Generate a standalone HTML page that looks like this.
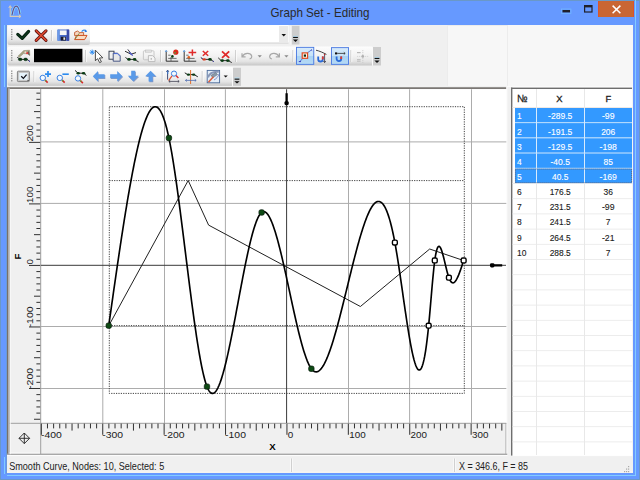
<!DOCTYPE html>
<html><head><meta charset="utf-8"><title>Graph Set - Editing</title>
<style>
html,body{margin:0;padding:0;}
body{width:640px;height:480px;overflow:hidden;background:#6699ff;font-family:"Liberation Sans",sans-serif;}
svg{display:block;font-family:"Liberation Sans",sans-serif;}
</style></head><body>
<svg width="640" height="480" viewBox="0 0 640 480" shape-rendering="auto">
<defs>
<linearGradient id="tb" x1="0" y1="0" x2="0" y2="1">
<stop offset="0" stop-color="#fdfdfd"/><stop offset="0.5" stop-color="#f2f2f2"/><stop offset="0.78" stop-color="#e4e4e4"/><stop offset="1" stop-color="#c6c6c6"/>
</linearGradient>
<linearGradient id="chev" x1="0" y1="0" x2="0" y2="1">
<stop offset="0" stop-color="#d8d8d8"/><stop offset="1" stop-color="#c4c4c4"/>
</linearGradient>
<linearGradient id="press" x1="0" y1="0" x2="0" y2="1">
<stop offset="0" stop-color="#d9ecfb"/><stop offset="0.5" stop-color="#c6e2f8"/><stop offset="0.52" stop-color="#a9d3f4"/><stop offset="1" stop-color="#b6daf5"/>
</linearGradient>
</defs>

<rect x="0" y="0" width="640" height="480" fill="#6699ff"/>
<rect x="0.5" y="0.5" width="639" height="479" fill="none" stroke="#6a98c8" stroke-width="1"/>
<rect x="4" y="25" width="1" height="62" fill="#82ccff"/>
<rect x="4" y="457" width="1" height="17" fill="#82ccff"/>
<rect x="6" y="25" width="1" height="449" fill="#6a9ad8"/>
<rect x="635" y="0" width="1" height="476" fill="#82ccff"/>
<rect x="7" y="475" width="629" height="1" fill="#82ccff"/>
<g>
<path d="M10.2,6.4 V16.4 H20.4" fill="none" stroke="#d8cdb8" stroke-width="1.1"/>
<path d="M8.8,8 L10.2,5.6 L11.6,8 M18.8,15 L21,16.4 L18.8,17.8" fill="none" stroke="#d8cdb8" stroke-width="1"/>
<path d="M12,15 C13.2,9 14.6,6.2 16.2,6.2 C17.8,6.2 19.2,9 20,14.2" fill="none" stroke="#88e0ff" stroke-width="2.6"/>
<path d="M12,15 C13.2,9 14.6,6.2 16.2,6.2 C17.8,6.2 19.2,9 20,14.2" fill="none" stroke="#6a4a8c" stroke-width="1.2"/>
</g>
<text x="320" y="16.5" font-size="12.4" fill="#2a2a2a" textLength="99" lengthAdjust="spacingAndGlyphs" text-anchor="middle" >Graph Set - Editing</text>
<rect x="562.5" y="10" width="7.5" height="2.4" fill="#20202a"/>
<rect x="561.5" y="9" width="9.5" height="4.4" fill="none" stroke="#7fd0ff" stroke-width="0.6" opacity="0.7"/>
<rect x="584.6" y="5.6" width="7.4" height="6.4" fill="none" stroke="#20202a" stroke-width="1.2"/>
<rect x="584.6" y="5.6" width="7.4" height="1.8" fill="#20202a"/>
<rect x="598" y="1" width="36" height="16" fill="#c96633"/>
<rect x="598" y="1" width="0.8" height="16" fill="#e0502a"/>
<rect x="633.2" y="1" width="0.8" height="16" fill="#e0502a"/>
<path d="M612.6,5.6 L620.4,13.2 M620.4,5.6 L612.6,13.2" stroke="#fff" stroke-width="1.5"/>
<rect x="7" y="25" width="626" height="448" fill="#f0f0f0"/>
<rect x="447" y="25" width="186" height="62" fill="#f7f7f7"/>
<rect x="447.5" y="25.5" width="60" height="61" fill="none" stroke="#ececec" stroke-width="1"/>
<rect x="7.5" y="25.5" width="82.5" height="19.5" rx="2" fill="url(#tb)"/>
<rect x="11.1" y="29.0" width="1.3" height="1.3" fill="#8a8a8a"/>
<rect x="11.1" y="31.4" width="1.3" height="1.3" fill="#8a8a8a"/>
<rect x="11.1" y="33.8" width="1.3" height="1.3" fill="#8a8a8a"/>
<rect x="11.1" y="36.2" width="1.3" height="1.3" fill="#8a8a8a"/>
<rect x="11.1" y="38.6" width="1.3" height="1.3" fill="#8a8a8a"/>
<rect x="90" y="25" width="198.5" height="18" fill="#ffffff"/>
<rect x="90" y="42.6" width="198.5" height="0.8" fill="#c8c8c8"/>
<rect x="279" y="26" width="9" height="16" fill="#eaeaea"/>
<path d="M281.5,34 H286 L283.75,36.6 Z" fill="#101010"/>
<rect x="291.5" y="25.8" width="8.0" height="18.7" fill="#cdcdcd"/>
<rect x="290.5" y="25.8" width="1" height="18.7" fill="#fafafa"/>
<rect x="293.1" y="35.9" width="4.8" height="0.8" fill="#a8e0ff"/>
<rect x="293.1" y="36.9" width="4.8" height="1.1" fill="#101010"/>
<path d="M292.9,39.5 H298.1 L295.5,41.9 Z" fill="#101010"/>
<rect x="7.5" y="46.5" width="366.0" height="19.0" rx="2" fill="url(#tb)"/>
<rect x="11.1" y="50.0" width="1.3" height="1.3" fill="#8a8a8a"/>
<rect x="11.1" y="52.4" width="1.3" height="1.3" fill="#8a8a8a"/>
<rect x="11.1" y="54.8" width="1.3" height="1.3" fill="#8a8a8a"/>
<rect x="11.1" y="57.2" width="1.3" height="1.3" fill="#8a8a8a"/>
<rect x="11.1" y="59.6" width="1.3" height="1.3" fill="#8a8a8a"/>
<rect x="373" y="47" width="8" height="18.5" fill="#cdcdcd"/>
<rect x="372" y="47" width="1" height="18.5" fill="#fafafa"/>
<rect x="374.6" y="56.9" width="4.8" height="0.8" fill="#a8e0ff"/>
<rect x="374.6" y="57.9" width="4.8" height="1.1" fill="#101010"/>
<path d="M374.4,60.5 H379.6 L377.0,62.9 Z" fill="#101010"/>
<rect x="7.5" y="67" width="226.5" height="19" rx="2" fill="url(#tb)"/>
<rect x="11.1" y="70.5" width="1.3" height="1.3" fill="#8a8a8a"/>
<rect x="11.1" y="72.9" width="1.3" height="1.3" fill="#8a8a8a"/>
<rect x="11.1" y="75.3" width="1.3" height="1.3" fill="#8a8a8a"/>
<rect x="11.1" y="77.7" width="1.3" height="1.3" fill="#8a8a8a"/>
<rect x="11.1" y="80.1" width="1.3" height="1.3" fill="#8a8a8a"/>
<rect x="233" y="67.8" width="8" height="18.400000000000006" fill="#cdcdcd"/>
<rect x="232" y="67.8" width="1" height="18.400000000000006" fill="#fafafa"/>
<rect x="234.6" y="77.60000000000001" width="4.8" height="0.8" fill="#a8e0ff"/>
<rect x="234.6" y="78.60000000000001" width="4.8" height="1.1" fill="#101010"/>
<path d="M234.4,81.2 H239.6 L237.0,83.60000000000001 Z" fill="#101010"/>
<g id="icons">
<path d="M17.8,34.4 L22.2,38.4 L28.6,31.4" fill="none" stroke="#062010" stroke-width="3.2" stroke-linecap="round" stroke-linejoin="round"/>
<path d="M17.8,34.4 L22.2,38.4 L28.6,31.4" fill="none" stroke="#0e3a1c" stroke-width="1.2" stroke-linecap="round" stroke-linejoin="round"/>
<path d="M36.2,30.8 L46,40.4 M46,30.8 L36.2,40.4" stroke="#5a1410" stroke-width="3.1" stroke-linecap="round"/>
<path d="M36.2,30.8 L46,40.4 M46,30.8 L36.2,40.4" stroke="#e0482e" stroke-width="1.5" stroke-linecap="round"/>
<rect x="51" y="30" width="0.8" height="11" fill="#b8b8b8"/>
<rect x="51.8" y="30" width="0.8" height="11" fill="#ffffff"/>
<rect x="57.4" y="29.6" width="11.8" height="11.2" rx="0.8" fill="#4a6cc8"/>
<rect x="57.4" y="29.6" width="2.2" height="11.2" fill="#6a9ae8"/>
<rect x="66.6" y="29.6" width="2.6" height="11.2" fill="#3a4aa8"/>
<rect x="59.8" y="30.4" width="6.8" height="4.6" fill="#f6f6f6"/>
<rect x="60.8" y="36.8" width="5.2" height="3.8" fill="#1a1a28"/>
<rect x="63.4" y="37.4" width="1.8" height="2.4" fill="#e8e8e8"/>
<path d="M74.6,32.4 L77.4,31 L79.8,32.6 H83.6 V35.6 H74.6 Z" fill="#f6d6c0" stroke="#c05a30" stroke-width="0.9" stroke-linejoin="round"/>
<path d="M74.6,39.6 L76.6,35.4 H87 L84.6,39.6 Z" fill="#f8dcc4" stroke="#d0501e" stroke-width="1" stroke-linejoin="round"/>
<path d="M75.2,39 L79.4,33.2" stroke="#6a8a3a" stroke-width="0.8"/>
<path d="M81.6,31.6 C83,29.8 84.8,29.6 86.2,31" fill="none" stroke="#3a8ae8" stroke-width="1.1"/>
<path d="M85.2,29.6 L87.2,31.8 L84.6,32.2 Z" fill="#2a7ae0"/>
<path d="M18,56.2 L23.6,50.6 L29.6,50.2 L29.8,55.6 L27.6,53.8 L23.6,53.6 L19.6,57 Z" fill="#a8a484" stroke="#8a8a70" stroke-width="0.5" stroke-linejoin="round"/>
<path d="M28.6,50.4 L29.8,55.6 L27.6,53.8 Z" fill="#5a5a5a"/>
<circle cx="27.2" cy="53.2" r="1.1" fill="#e03a3a"/><circle cx="25.4" cy="52.2" r="1" fill="#f0d8c8"/>
<path d="M17.2,57.4 L21,59.4 H27 L29.8,61.4" fill="none" stroke="#202020" stroke-width="0.9"/>
<path d="M28.6,60.6 L30,61.6" stroke="#4040c0" stroke-width="1"/>
<ellipse cx="20.2" cy="59.4" rx="1.9" ry="1.4" fill="#083a12" stroke="#062010" stroke-width="0.4"/><ellipse cx="25.6" cy="59.4" rx="1.9" ry="1.4" fill="#083a12" stroke="#062010" stroke-width="0.4"/>
<rect x="34" y="48.8" width="48.4" height="13.4" fill="#000"/>
<rect x="85" y="50" width="0.8" height="12" fill="#b8b8b8"/>
<rect x="85.8" y="50" width="0.8" height="12" fill="#ffffff"/>
<path d="M95.4,50.2 L95.4,60.8 L97.6,58.6 L99.6,62.6 L101.4,61.8 L99.4,58 L102.8,57.8 Z" fill="#fff" stroke="#3a3a3a" stroke-width="0.9" stroke-linejoin="round"/>
<path d="M90.4,50.4 L94,54 M94,50.4 L90.4,54 M92.2,49.6 V54.8 M89.6,52.2 H94.8" stroke="#2a8af0" stroke-width="0.9"/>
<rect x="109" y="51.2" width="5" height="8" fill="#f0f0f0" stroke="#303848" stroke-width="0.9"/>
<path d="M113.2,53.2 H117.6 L120.2,55.8 V61.2 H113.2 Z" fill="#e8e8e8" stroke="#3a4a7a" stroke-width="0.9"/>
<path d="M113.6,53.6 H117.4 L119.8,56" stroke="#4a6ae0" stroke-width="0.9" fill="none"/>
<path d="M125,51.2 L131,54.2 L136,52.6" fill="none" stroke="#303030" stroke-width="1"/>
<path d="M127.8,49.4 L132.4,55.6" stroke="#3a3a4a" stroke-width="1"/>
<path d="M129.4,52.4 L132.6,55.4" stroke="#4a5ae8" stroke-width="1.1"/>
<path d="M125.4,57.4 L128,59.4 H134 L138.6,61.8" fill="none" stroke="#202020" stroke-width="0.9"/>
<ellipse cx="129" cy="59.4" rx="1.8" ry="1.3" fill="#083a12"/><ellipse cx="134.6" cy="59.4" rx="1.8" ry="1.3" fill="#083a12"/>
<rect x="143.4" y="50.8" width="10.6" height="9" rx="0.8" fill="none" stroke="#c4c4c4" stroke-width="0.9"/>
<rect x="145.6" y="50" width="5.8" height="2.2" fill="#e4e4e4" stroke="#c0c0c0" stroke-width="0.6"/>
<path d="M148.4,55.6 H152.6 L155,58 V61.6 H148.4 Z" fill="#f4f4f4" stroke="#b8b8b8" stroke-width="0.9"/>
<rect x="150.6" y="58.2" width="1.4" height="1.4" fill="#b0b0b0"/>
<rect x="160" y="50" width="0.8" height="12" fill="#b8b8b8"/>
<rect x="160.8" y="50" width="0.8" height="12" fill="#ffffff"/>
<path d="M166.2,51.4 V61.2 H178.2" fill="none" stroke="#202020" stroke-width="0.9"/>
<path d="M165.2,52 L166.2,50.2 L167.2,52" fill="none" stroke="#4a90e0" stroke-width="0.8"/>
<path d="M168.2,55.2 H170.6 M168.2,58.4 H176.6 M171.0,57 V61" stroke="#505050" stroke-width="0.8"/>
<circle cx="175.8" cy="52.2" r="2.6" fill="#d82a1a"/><circle cx="175" cy="52.8" r="0.9" fill="#50a040"/>
<circle cx="172.4" cy="56.4" r="1.3" fill="#083a12"/>
<path d="M184.2,51.4 V61.2 H196.2" fill="none" stroke="#202020" stroke-width="0.9"/>
<path d="M183.2,52 L184.2,50.2 L185.2,52" fill="none" stroke="#4a90e0" stroke-width="0.8"/>
<path d="M186.2,55.2 H188.6 M186.2,58.4 H194.6 M189.0,57 V61" stroke="#505050" stroke-width="0.8"/>
<path d="M188.6,52.6 H196.2 M192.4,49.6 V55.8" stroke="#e02a2a" stroke-width="1.5"/>
<circle cx="188.8" cy="57.2" r="1.3" fill="#e06020"/>
<path d="M202.8,51 L208.20000000000002,55.8 M208.20000000000002,51 L202.8,55.8" stroke="#e02a2a" stroke-width="1.5"/>
<path d="M200.8,57.6 L203.4,59.4 H210.20000000000002 L213.8,61.6" fill="none" stroke="#202020" stroke-width="0.9"/>
<ellipse cx="204.20000000000002" cy="59.4" rx="1.7" ry="1.2" fill="#d83a20"/><ellipse cx="210.0" cy="59.4" rx="1.8" ry="1.3" fill="#083a12"/>
<path d="M201.4,58 L202.4,58.6 M212.8,61 L213.8,61.6" stroke="#4040c0" stroke-width="0.9"/>
<path d="M222.0,51.4 L229.2,57.8 M229.2,51.4 L222.0,57.8" stroke="#e02a2a" stroke-width="1.8"/>
<path d="M218.2,57.8 L221.2,60.6 H228.2 L231.79999999999998,62.6" fill="none" stroke="#202020" stroke-width="0.9"/>
<ellipse cx="222.2" cy="60.6" rx="1.8" ry="1.3" fill="#083a12"/><ellipse cx="227.79999999999998" cy="60.6" rx="1.8" ry="1.3" fill="#083a12"/>
<rect x="235.4" y="50" width="0.8" height="12" fill="#b8b8b8"/>
<rect x="236.20000000000002" y="50" width="0.8" height="12" fill="#ffffff"/>
<path d="M242,53.2 V56.8 H245.6 M242.6,56.2 C244.6,52.6 250.4,52.4 251.6,55.8 C252.2,57.4 251,58.6 249.6,58.8" fill="none" stroke="#a8a8a8" stroke-width="1.2"/>
<path d="M257.6,55.3 H261.8 L259.7,57.4 Z" fill="#8a8a8a"/>
<path d="M279.4,53.2 V56.8 H275.8 M278.8,56.2 C276.8,52.6 271,52.4 269.8,55.8 C269.2,57.4 270.4,58.6 271.8,58.8" fill="none" stroke="#a8a8a8" stroke-width="1.2"/>
<path d="M284.3,55.3 H288.5 L286.4,57.4 Z" fill="#8a8a8a"/>
<rect x="292.6" y="50" width="0.8" height="12" fill="#b8b8b8"/>
<rect x="293.40000000000003" y="50" width="0.8" height="12" fill="#ffffff"/>
<rect x="296" y="46.9" width="18.19999999999999" height="17.9" fill="url(#press)"/>
<rect x="296.45" y="47.35" width="17.29999999999999" height="17.0" fill="none" stroke="#4a78e0" stroke-width="0.9"/>
<path d="M300,61.4 L302.6,58.6 M307.4,52.8 L311.4,50" stroke="#3a5ac8" stroke-width="0.8"/>
<path d="M298.8,61.6 H301 M311,49.6 L312.2,50.6" stroke="#3a3ac0" stroke-width="1"/>
<rect x="302.2" y="52.9" width="5.4" height="5.4" fill="#fff0e0" stroke="#e04a20" stroke-width="1.2"/>
<rect x="303.8" y="54.5" width="2.2" height="2.2" fill="#0a2a10"/>
<path d="M316,50.2 C319.6,51 323,52.6 326.4,54.4" fill="none" stroke="#303030" stroke-width="0.9"/>
<path d="M318.2,56.4 V59.2 A2.3,2.3 0 0 0 322.8,59.2 V56.4" fill="none" stroke="#2a6ad8" stroke-width="1.8"/>
<path d="M322.8,56.4 V59.4" stroke="#e03a2a" stroke-width="1.8"/>
<path d="M324.6,54.6 V62.4 M323.4,61 L324.6,62.6 L325.8,61" fill="none" stroke="#303040" stroke-width="0.8"/>
<circle cx="324.6" cy="54.6" r="0.8" fill="#c03030"/>
<rect x="331" y="47.2" width="18" height="17.599999999999994" fill="url(#press)"/>
<rect x="331.45" y="47.650000000000006" width="17.1" height="16.699999999999996" fill="none" stroke="#4a78e0" stroke-width="0.9"/>
<rect x="335" y="52.4" width="2.2" height="2" fill="#101010"/>
<path d="M337.2,53.4 H345 M343.8,52.3 L345.2,53.4 L343.8,54.5" fill="none" stroke="#303030" stroke-width="0.8"/>
<path d="M336.6,56.4 V58.8 A2.3,2.3 0 0 0 341.2,58.8 V56.4" fill="none" stroke="#2a6ad8" stroke-width="1.8"/>
<path d="M341.2,56.4 V59" stroke="#e03a2a" stroke-width="1.8"/>
<rect x="350.6" y="50" width="0.8" height="12" fill="#b8b8b8"/>
<rect x="351.40000000000003" y="50" width="0.8" height="12" fill="#ffffff"/>
<path d="M362.8,50 V63" stroke="#c8c8c8" stroke-width="0.8" stroke-dasharray="1.2 0.8"/>
<path d="M357,56.4 H368.6" stroke="#cfcfcf" stroke-width="0.8" stroke-dasharray="1.2 0.8"/>
<rect x="357" y="52" width="3.6" height="1.2" fill="#b8b8b8"/><rect x="357" y="59.2" width="3.6" height="1.2" fill="#b8b8b8"/><rect x="357" y="61" width="3.6" height="1" fill="#c8c8c8"/><circle cx="362.8" cy="56.4" r="1.3" fill="#b0b0b0"/>
<rect x="17.4" y="71.2" width="12" height="10.4" rx="0.8" fill="#c8c8c8" stroke="#7a7a7a" stroke-width="0.9"/>
<rect x="19.2" y="73" width="8.4" height="6.8" fill="#e6f4fc"/>
<path d="M21.2,76.2 L23.4,78.4 L26.6,74.6" fill="none" stroke="#101018" stroke-width="1.3"/>
<rect x="27.6" y="80" width="1" height="1" fill="#202020"/>
<rect x="33.6" y="71" width="0.8" height="11" fill="#b8b8b8"/>
<rect x="34.4" y="71" width="0.8" height="11" fill="#ffffff"/>
<circle cx="42.8" cy="77.9" r="2.7" fill="#f4faff" stroke="#3a80e0" stroke-width="1"/>
<path d="M45.099999999999994,80.2 L47.699999999999996,82.60000000000001" stroke="#d82a2a" stroke-width="1.6"/>
<path d="M45.099999999999994,80.2 L46.0,81.10000000000001" stroke="#60a040" stroke-width="1.6"/>
<path d="M45,74.1 H51 M48,71.1 V77.1" stroke="#2a8af0" stroke-width="1.7"/>
<circle cx="59.8" cy="77.9" r="2.7" fill="#f4faff" stroke="#3a80e0" stroke-width="1"/>
<path d="M62.099999999999994,80.2 L64.7,82.60000000000001" stroke="#d82a2a" stroke-width="1.6"/>
<path d="M62.099999999999994,80.2 L63.0,81.10000000000001" stroke="#60a040" stroke-width="1.6"/>
<path d="M62.4,74.2 H68.8" stroke="#2a8af0" stroke-width="1.6"/>
<circle cx="78" cy="78.4" r="2.7" fill="#f4faff" stroke="#3a80e0" stroke-width="1"/>
<path d="M80.3,80.7 L82.9,83.10000000000001" stroke="#d82a2a" stroke-width="1.6"/>
<path d="M80.3,80.7 L81.2,81.60000000000001" stroke="#60a040" stroke-width="1.6"/>
<path d="M75,70.4 L78,73.2 H83.6 L86.4,75.4" fill="none" stroke="#202020" stroke-width="1"/>
<ellipse cx="78.2" cy="73.2" rx="1.7" ry="1.3" fill="#083a12"/><ellipse cx="83.6" cy="73.2" rx="1.7" ry="1.3" fill="#083a12"/>
<path d="M92.8,76.2 L98,71 V74.2 H104.6 V78.2 H98 V81.4 Z" fill="#3a5aa0" transform="translate(0.7,0.9)" opacity="0.55"/>
<path d="M92.8,76.2 L98,71 V74.2 H104.6 V78.2 H98 V81.4 Z" fill="#5a9ae8"/>
<path d="M122.4,76.2 L117.2,71 V74.2 H110.2 V78.2 H117.2 V81.4 Z" fill="#3a5aa0" transform="translate(0.7,0.9)" opacity="0.55"/>
<path d="M122.4,76.2 L117.2,71 V74.2 H110.2 V78.2 H117.2 V81.4 Z" fill="#5a9ae8"/>
<path d="M133.2,81.2 L127.8,75.8 H131.2 V70.8 H135.2 V75.8 H138.6 Z" fill="#3a5aa0" transform="translate(0.7,0.9)" opacity="0.55"/>
<path d="M133.2,81.2 L127.8,75.8 H131.2 V70.8 H135.2 V75.8 H138.6 Z" fill="#5a9ae8"/>
<path d="M150.6,70.8 L145.2,76.2 H148.6 V81.4 H152.6 V76.2 H156 Z" fill="#3a5aa0" transform="translate(0.7,0.9)" opacity="0.55"/>
<path d="M150.6,70.8 L145.2,76.2 H148.6 V81.4 H152.6 V76.2 H156 Z" fill="#5a9ae8"/>
<rect x="161.8" y="71" width="0.8" height="11" fill="#b8b8b8"/>
<rect x="162.60000000000002" y="71" width="0.8" height="11" fill="#ffffff"/>
<path d="M167.6,70.4 V79.6 M166.4,71.8 L167.6,70.2 L168.8,71.8" fill="none" stroke="#2a3a6a" stroke-width="0.9"/>
<path d="M167.8,70.6 V74" stroke="#3a80e0" stroke-width="0.9"/>
<circle cx="174" cy="73.6" r="2.6" fill="#f4faff" stroke="#3a80e0" stroke-width="1"/>
<path d="M172,75.8 L168.6,80.6" stroke="#e05030" stroke-width="1.2"/>
<path d="M176,75.6 L178.4,78" stroke="#d82a2a" stroke-width="1.4"/>
<path d="M169,81.4 H179 M170.2,80.3 L168.8,81.4 L170.2,82.5 M177.8,80.3 L179.2,81.4 L177.8,82.5" fill="none" stroke="#404050" stroke-width="0.8"/>
<path d="M184.8,72.8 L187.6,74.6 H194.2 L197.8,76.8" fill="none" stroke="#202020" stroke-width="1"/>
<ellipse cx="188.4" cy="74.6" rx="1.7" ry="1.2" fill="#083a12"/><ellipse cx="193.6" cy="74.6" rx="1.7" ry="1.2" fill="#083a12"/>
<path d="M190.6,70 V84" stroke="#e07030" stroke-width="1"/>
<path d="M185.6,80.4 H196 M186.8,79.3 L185.4,80.4 L186.8,81.5 M194.8,79.3 L196.2,80.4 L194.8,81.5" fill="none" stroke="#4a6ab0" stroke-width="0.8"/>
<rect x="201.8" y="71" width="0.8" height="11" fill="#b8b8b8"/>
<rect x="202.60000000000002" y="71" width="0.8" height="11" fill="#ffffff"/>
<rect x="207.2" y="70.4" width="12.4" height="12.4" fill="#e4eef8" stroke="#4a6a9a" stroke-width="0.9"/>
<path d="M208,77.4 C209.6,72.6 213.4,71.4 218.8,71.8" fill="none" stroke="#8a98b8" stroke-width="2"/>
<path d="M210.8,75.6 L215.6,72.6 L217.6,74.6 L213,77.6 Z" fill="#8a9aa8" stroke="#5a6a7a" stroke-width="0.5"/>
<path d="M208.4,82.2 L213.4,76.8" stroke="#d86040" stroke-width="1.6"/>
<path d="M214,80 C216.5,78.6 218.4,76.6 219,74" fill="none" stroke="#6a7ac0" stroke-width="0.8"/>
<path d="M223.6,75.4 H227.8 L225.7,77.6 Z" fill="#101010"/>
</g>
<rect x="7" y="87" width="500.5" height="368.5" fill="#f0f0f0"/>
<rect x="7" y="85.9" width="626" height="1" fill="#fbfbfb"/>
<rect x="7" y="86.9" width="499.5" height="0.5" fill="#a8a8a8"/>
<rect x="7" y="87.4" width="499.5" height="1.5" fill="#6e6a66"/>
<rect x="9.2" y="89" width="31" height="0.8" fill="#fafafa"/>
<rect x="7" y="88" width="1.2" height="366" fill="#787068"/>
<rect x="8.2" y="88" width="1.6" height="366" fill="#a4a4a4"/>
<rect x="506.3" y="87" width="1.2" height="368.5" fill="#ffffff"/>
<rect x="505.4" y="423" width="0.9" height="31" fill="#b0b0b0"/>
<rect x="7" y="453.6" width="500.5" height="1.4" fill="#a8a8a8"/>
<rect x="7" y="455.2" width="626" height="1" fill="#ffffff"/>
<rect x="9.5" y="452.4" width="31" height="1" fill="#f8f8f8"/>
<rect x="41" y="89.2" width="465.3" height="333.8" fill="#ffffff"/>
<rect x="40.2" y="89" width="1" height="365" fill="#a0a0a0"/>
<rect x="9" y="422.8" width="497.3" height="1" fill="#a0a0a0"/>
<rect x="9.8" y="89.2" width="0.9" height="365" fill="#fafafa"/>
<path d="M41.34,423.6 v11.2 M47.48,423.6 v4.8 M53.62,423.6 v4.8 M59.76,423.6 v4.8 M65.90,423.6 v4.8 M72.04,423.6 v7 M78.18,423.6 v4.8 M84.32,423.6 v4.8 M90.46,423.6 v4.8 M96.60,423.6 v4.8 M102.74,423.6 v11.2 M108.88,423.6 v4.8 M115.02,423.6 v4.8 M121.16,423.6 v4.8 M127.30,423.6 v4.8 M133.44,423.6 v7 M139.58,423.6 v4.8 M145.72,423.6 v4.8 M151.86,423.6 v4.8 M158.00,423.6 v4.8 M164.14,423.6 v11.2 M170.28,423.6 v4.8 M176.42,423.6 v4.8 M182.56,423.6 v4.8 M188.70,423.6 v4.8 M194.84,423.6 v7 M200.98,423.6 v4.8 M207.12,423.6 v4.8 M213.26,423.6 v4.8 M219.40,423.6 v4.8 M225.54,423.6 v11.2 M231.68,423.6 v4.8 M237.82,423.6 v4.8 M243.96,423.6 v4.8 M250.10,423.6 v4.8 M256.24,423.6 v7 M262.38,423.6 v4.8 M268.52,423.6 v4.8 M274.66,423.6 v4.8 M280.80,423.6 v4.8 M286.94,423.6 v11.2 M293.08,423.6 v4.8 M299.22,423.6 v4.8 M305.36,423.6 v4.8 M311.50,423.6 v4.8 M317.64,423.6 v7 M323.78,423.6 v4.8 M329.92,423.6 v4.8 M336.06,423.6 v4.8 M342.20,423.6 v4.8 M348.34,423.6 v11.2 M354.48,423.6 v4.8 M360.62,423.6 v4.8 M366.76,423.6 v4.8 M372.90,423.6 v4.8 M379.04,423.6 v7 M385.18,423.6 v4.8 M391.32,423.6 v4.8 M397.46,423.6 v4.8 M403.60,423.6 v4.8 M409.74,423.6 v11.2 M415.88,423.6 v4.8 M422.02,423.6 v4.8 M428.16,423.6 v4.8 M434.30,423.6 v4.8 M440.44,423.6 v7 M446.58,423.6 v4.8 M452.72,423.6 v4.8 M458.86,423.6 v4.8 M465.00,423.6 v4.8 M471.14,423.6 v11.2 M477.28,423.6 v4.8 M483.42,423.6 v4.8 M489.56,423.6 v4.8 M495.70,423.6 v4.8 M501.84,423.6 v7" stroke="#303030" stroke-width="1"/>
<path d="M40.2,419.25 h-6.2 M40.2,413.10 h-3.8 M40.2,406.95 h-3.8 M40.2,400.80 h-3.8 M40.2,394.64 h-3.8 M40.2,388.49 h-11.2 M40.2,382.34 h-3.8 M40.2,376.18 h-3.8 M40.2,370.03 h-3.8 M40.2,363.88 h-3.8 M40.2,357.73 h-6.2 M40.2,351.57 h-3.8 M40.2,345.42 h-3.8 M40.2,339.27 h-3.8 M40.2,333.11 h-3.8 M40.2,326.96 h-11.2 M40.2,320.81 h-3.8 M40.2,314.65 h-3.8 M40.2,308.50 h-3.8 M40.2,302.35 h-3.8 M40.2,296.19 h-6.2 M40.2,290.04 h-3.8 M40.2,283.89 h-3.8 M40.2,277.74 h-3.8 M40.2,271.58 h-3.8 M40.2,265.43 h-11.2 M40.2,259.28 h-3.8 M40.2,253.12 h-3.8 M40.2,246.97 h-3.8 M40.2,240.82 h-3.8 M40.2,234.67 h-6.2 M40.2,228.51 h-3.8 M40.2,222.36 h-3.8 M40.2,216.21 h-3.8 M40.2,210.05 h-3.8 M40.2,203.90 h-11.2 M40.2,197.75 h-3.8 M40.2,191.59 h-3.8 M40.2,185.44 h-3.8 M40.2,179.29 h-3.8 M40.2,173.14 h-6.2 M40.2,166.98 h-3.8 M40.2,160.83 h-3.8 M40.2,154.68 h-3.8 M40.2,148.52 h-3.8 M40.2,142.37 h-11.2 M40.2,136.22 h-3.8 M40.2,130.06 h-3.8 M40.2,123.91 h-3.8 M40.2,117.76 h-3.8 M40.2,111.61 h-6.2 M40.2,105.45 h-3.8 M40.2,99.30 h-3.8 M40.2,93.15 h-3.8" stroke="#303030" stroke-width="1"/>
<text x="40.94" y="438.3" font-size="9.7" fill="#202020" textLength="20.8" lengthAdjust="spacingAndGlyphs">-400</text>
<text x="102.34" y="438.3" font-size="9.7" fill="#202020" textLength="20.8" lengthAdjust="spacingAndGlyphs">-300</text>
<text x="163.74" y="438.3" font-size="9.7" fill="#202020" textLength="20.8" lengthAdjust="spacingAndGlyphs">-200</text>
<text x="225.14" y="438.3" font-size="9.7" fill="#202020" textLength="20.8" lengthAdjust="spacingAndGlyphs">-100</text>
<text x="287.84" y="438.3" font-size="9.7" fill="#202020" textLength="5.5" lengthAdjust="spacingAndGlyphs">0</text>
<text x="349.24" y="438.3" font-size="9.7" fill="#202020" textLength="16.4" lengthAdjust="spacingAndGlyphs">100</text>
<text x="410.64" y="438.3" font-size="9.7" fill="#202020" textLength="16.4" lengthAdjust="spacingAndGlyphs">200</text>
<text x="472.04" y="438.3" font-size="9.7" fill="#202020" textLength="16.4" lengthAdjust="spacingAndGlyphs">300</text>
<text transform="translate(33.3,388.89) rotate(-90)" x="0" y="0" font-size="9.8" fill="#202020" textLength="20.9" lengthAdjust="spacingAndGlyphs">-200</text>
<text transform="translate(33.3,327.36) rotate(-90)" x="0" y="0" font-size="9.8" fill="#202020" textLength="20.9" lengthAdjust="spacingAndGlyphs">-100</text>
<text transform="translate(33.3,264.53) rotate(-90)" x="0" y="0" font-size="9.8" fill="#202020" textLength="5.5" lengthAdjust="spacingAndGlyphs">0</text>
<text transform="translate(33.3,203.00) rotate(-90)" x="0" y="0" font-size="9.8" fill="#202020" textLength="16.5" lengthAdjust="spacingAndGlyphs">100</text>
<text transform="translate(33.3,141.47) rotate(-90)" x="0" y="0" font-size="9.8" fill="#202020" textLength="16.5" lengthAdjust="spacingAndGlyphs">200</text>
<text x="269.3" y="450.2" font-size="9.6" font-weight="bold" fill="#000">X</text>
<text transform="translate(20.7,259.4) rotate(-90)" x="0" y="0" font-size="9.6" font-weight="bold" fill="#000">F</text>
<path d="M24.3,433 L29.6,438.3 L24.3,443.6 L19,438.3 Z" fill="none" stroke="#202020" stroke-width="0.9"/>
<path d="M24.3,433 V443.6 M19,438.3 H29.6" stroke="#202020" stroke-width="0.9"/>
<svg x="41" y="89.2" width="465.3" height="333.8" viewBox="41 89.2 465.3 333.8" overflow="hidden">
<path d="M102.8,89 V423 M164.5,89 V423 M225.4,89 V423 M348.5,89 V423 M409.6,89 V423 M471.5,89 V423 M41,141.9 H507 M41,203.4 H507 M41,326.5 H507 M41,388.5 H507" stroke="#acacac" stroke-width="1"/>
<path d="M286.6,89 V423 M41,265.3 H506" stroke="#3a3a3a" stroke-width="1"/>
<path d="M286.60,93.3 V103" stroke="#000" stroke-width="2.3"/>
<rect x="284.50" y="101.2" width="4.2" height="4" rx="1.4" fill="#000"/>
<path d="M494,265.30 H502.2" stroke="#000" stroke-width="2.3"/>
<rect x="490" y="263.20" width="4.4" height="4.2" rx="1.4" fill="#000"/>
<path d="M109.3,106.7 H464.3 V393.4 H109.3 Z" fill="none" stroke="#404040" stroke-width="1" stroke-dasharray="1.2 1.2"/>
<path d="M109.3,180.6 H464.3 M109.3,325.6 H464.3" fill="none" stroke="#404040" stroke-width="1" stroke-dasharray="1.2 1.2"/>
<path d="M108.9,325.5 L188.2,180.5 L208.6,225.1 L360.4,306.5 L429.7,249 L463.8,260.6" fill="none" stroke="#202020" stroke-width="1"/>
<path d="M108.75,325.66 L109.25,322.08 L109.76,318.49 L110.27,314.91 L110.78,311.33 L111.29,307.75 L111.79,304.18 L112.30,300.61 L112.81,297.05 L113.32,293.49 L113.82,289.95 L114.33,286.41 L114.84,282.88 L115.35,279.36 L115.85,275.85 L116.36,272.35 L116.87,268.87 L117.38,265.40 L117.89,261.95 L118.39,258.51 L118.90,255.08 L119.41,251.68 L119.92,248.29 L120.42,244.92 L120.93,241.57 L121.44,238.24 L121.95,234.93 L122.46,231.65 L122.96,228.38 L123.47,225.14 L123.98,221.93 L124.49,218.74 L124.99,215.58 L125.50,212.45 L126.01,209.34 L126.52,206.26 L127.02,203.22 L127.53,200.20 L128.04,197.22 L128.55,194.26 L129.06,191.34 L129.56,188.46 L130.07,185.61 L130.58,182.80 L131.09,180.02 L131.59,177.28 L132.10,174.58 L132.61,171.92 L133.12,169.30 L133.62,166.72 L134.13,164.18 L134.64,161.69 L135.15,159.23 L135.66,156.83 L136.16,154.46 L136.67,152.15 L137.18,149.88 L137.69,147.66 L138.19,145.49 L138.70,143.37 L139.21,141.29 L139.72,139.27 L140.23,137.30 L140.73,135.39 L141.24,133.53 L141.75,131.72 L142.26,129.97 L142.76,128.28 L143.27,126.64 L143.78,125.06 L144.29,123.54 L144.79,122.08 L145.30,120.68 L145.81,119.34 L146.32,118.07 L146.83,116.86 L147.33,115.71 L147.84,114.62 L148.35,113.61 L148.86,112.66 L149.36,111.77 L149.87,110.96 L150.38,110.22 L150.89,109.54 L151.39,108.94 L151.90,108.40 L152.41,107.95 L152.92,107.56 L153.43,107.25 L153.93,107.01 L154.44,106.85 L154.95,106.77 L155.46,106.76 L155.96,106.84 L156.47,106.99 L156.98,107.23 L157.49,107.54 L158.00,107.94 L158.50,108.42 L159.01,108.98 L159.52,109.63 L160.03,110.36 L160.53,111.19 L161.04,112.09 L161.55,113.09 L162.06,114.17 L162.56,115.35 L163.07,116.61 L163.58,117.97 L164.09,119.42 L164.60,120.96 L165.10,122.60 L165.61,124.33 L166.12,126.16 L166.63,128.08 L167.13,130.10 L167.64,132.22 L168.15,134.44 L168.66,136.76 L169.16,139.18 L169.67,141.70 L170.18,144.32 L170.69,147.03 L171.20,149.83 L171.70,152.72 L172.21,155.69 L172.72,158.75 L173.23,161.88 L173.73,165.09 L174.24,168.37 L174.75,171.71 L175.26,175.13 L175.77,178.60 L176.27,182.14 L176.78,185.73 L177.29,189.38 L177.80,193.08 L178.30,196.82 L178.81,200.61 L179.32,204.43 L179.83,208.30 L180.33,212.20 L180.84,216.13 L181.35,220.09 L181.86,224.08 L182.37,228.09 L182.87,232.12 L183.38,236.16 L183.89,240.22 L184.40,244.29 L184.90,248.36 L185.41,252.44 L185.92,256.51 L186.43,260.59 L186.93,264.66 L187.44,268.72 L187.95,272.77 L188.46,276.80 L188.97,280.82 L189.47,284.82 L189.98,288.79 L190.49,292.73 L191.00,296.64 L191.50,300.52 L192.01,304.37 L192.52,308.17 L193.03,311.93 L193.54,315.64 L194.04,319.31 L194.55,322.92 L195.06,326.48 L195.57,329.98 L196.07,333.42 L196.58,336.79 L197.09,340.10 L197.60,343.33 L198.10,346.49 L198.61,349.58 L199.12,352.58 L199.63,355.50 L200.14,358.34 L200.64,361.08 L201.15,363.73 L201.66,366.29 L202.17,368.75 L202.67,371.11 L203.18,373.36 L203.69,375.50 L204.20,377.53 L204.70,379.45 L205.21,381.25 L205.72,382.93 L206.23,384.49 L206.74,385.92 L207.24,387.22 L207.75,388.39 L208.26,389.43 L208.77,390.35 L209.27,391.14 L209.78,391.81 L210.29,392.37 L210.80,392.80 L211.31,393.12 L211.81,393.33 L212.32,393.42 L212.83,393.41 L213.34,393.29 L213.84,393.06 L214.35,392.74 L214.86,392.31 L215.37,391.79 L215.87,391.17 L216.38,390.45 L216.89,389.65 L217.40,388.75 L217.91,387.77 L218.41,386.70 L218.92,385.55 L219.43,384.32 L219.94,383.01 L220.44,381.62 L220.95,380.16 L221.46,378.63 L221.97,377.03 L222.47,375.36 L222.98,373.62 L223.49,371.82 L224.00,369.96 L224.51,368.03 L225.01,366.06 L225.52,364.02 L226.03,361.94 L226.54,359.80 L227.04,357.61 L227.55,355.38 L228.06,353.11 L228.57,350.79 L229.08,348.43 L229.58,346.03 L230.09,343.60 L230.60,341.13 L231.11,338.64 L231.61,336.11 L232.12,333.56 L232.63,330.98 L233.14,328.38 L233.64,325.75 L234.15,323.11 L234.66,320.46 L235.17,317.78 L235.68,315.10 L236.18,312.41 L236.69,309.71 L237.20,307.00 L237.71,304.29 L238.21,301.58 L238.72,298.87 L239.23,296.16 L239.74,293.46 L240.24,290.76 L240.75,288.07 L241.26,285.40 L241.77,282.74 L242.28,280.09 L242.78,277.47 L243.29,274.86 L243.80,272.27 L244.31,269.71 L244.81,267.18 L245.32,264.67 L245.83,262.20 L246.34,259.76 L246.85,257.35 L247.35,254.98 L247.86,252.65 L248.37,250.36 L248.88,248.12 L249.38,245.92 L249.89,243.77 L250.40,241.67 L250.91,239.62 L251.41,237.63 L251.92,235.69 L252.43,233.81 L252.94,232.00 L253.45,230.24 L253.95,228.55 L254.46,226.93 L254.97,225.38 L255.48,223.90 L255.98,222.49 L256.49,221.16 L257.00,219.91 L257.51,218.73 L258.01,217.64 L258.52,216.64 L259.03,215.72 L259.54,214.89 L260.05,214.15 L260.55,213.50 L261.06,212.95 L261.57,212.50 L262.08,212.15 L262.58,211.89 L263.09,211.73 L263.60,211.66 L264.11,211.69 L264.62,211.81 L265.12,212.02 L265.63,212.31 L266.14,212.69 L266.65,213.16 L267.15,213.70 L267.66,214.33 L268.17,215.04 L268.68,215.82 L269.18,216.67 L269.69,217.60 L270.20,218.60 L270.71,219.67 L271.22,220.81 L271.72,222.01 L272.23,223.27 L272.74,224.60 L273.25,225.99 L273.75,227.43 L274.26,228.94 L274.77,230.49 L275.28,232.10 L275.78,233.76 L276.29,235.47 L276.80,237.23 L277.31,239.04 L277.82,240.88 L278.32,242.77 L278.83,244.70 L279.34,246.67 L279.85,248.67 L280.35,250.71 L280.86,252.78 L281.37,254.89 L281.88,257.02 L282.39,259.18 L282.89,261.36 L283.40,263.57 L283.91,265.80 L284.42,268.05 L284.92,270.32 L285.43,272.61 L285.94,274.91 L286.45,277.23 L286.95,279.55 L287.46,281.88 L287.97,284.23 L288.48,286.57 L288.99,288.93 L289.49,291.28 L290.00,293.63 L290.51,295.99 L291.02,298.33 L291.52,300.68 L292.03,303.01 L292.54,305.34 L293.05,307.66 L293.55,309.96 L294.06,312.25 L294.57,314.53 L295.08,316.78 L295.59,319.02 L296.09,321.24 L296.60,323.43 L297.11,325.60 L297.62,327.73 L298.12,329.85 L298.63,331.93 L299.14,333.97 L299.65,335.99 L300.16,337.96 L300.66,339.90 L301.17,341.80 L301.68,343.66 L302.19,345.48 L302.69,347.25 L303.20,348.97 L303.71,350.65 L304.22,352.27 L304.72,353.84 L305.23,355.36 L305.74,356.82 L306.25,358.22 L306.76,359.57 L307.26,360.85 L307.77,362.07 L308.28,363.22 L308.79,364.31 L309.29,365.33 L309.80,366.28 L310.31,367.15 L310.82,367.95 L311.32,368.68 L311.83,369.33 L312.34,369.90 L312.85,370.39 L313.36,370.81 L313.86,371.16 L314.37,371.44 L314.88,371.64 L315.39,371.77 L315.89,371.83 L316.40,371.83 L316.91,371.76 L317.42,371.62 L317.93,371.42 L318.43,371.15 L318.94,370.82 L319.45,370.43 L319.96,369.98 L320.46,369.47 L320.97,368.90 L321.48,368.28 L321.99,367.60 L322.49,366.86 L323.00,366.07 L323.51,365.23 L324.02,364.33 L324.53,363.39 L325.03,362.39 L325.54,361.35 L326.05,360.26 L326.56,359.13 L327.06,357.94 L327.57,356.72 L328.08,355.45 L328.59,354.14 L329.09,352.79 L329.60,351.40 L330.11,349.97 L330.62,348.51 L331.13,347.01 L331.63,345.47 L332.14,343.90 L332.65,342.30 L333.16,340.66 L333.66,339.00 L334.17,337.30 L334.68,335.58 L335.19,333.82 L335.70,332.05 L336.20,330.24 L336.71,328.42 L337.22,326.57 L337.73,324.69 L338.23,322.80 L338.74,320.89 L339.25,318.96 L339.76,317.01 L340.26,315.04 L340.77,313.06 L341.28,311.07 L341.79,309.06 L342.30,307.04 L342.80,305.01 L343.31,302.97 L343.82,300.92 L344.33,298.87 L344.83,296.80 L345.34,294.73 L345.85,292.66 L346.36,290.59 L346.86,288.51 L347.37,286.43 L347.88,284.35 L348.39,282.27 L348.90,280.20 L349.40,278.13 L349.91,276.06 L350.42,274.00 L350.93,271.94 L351.43,269.89 L351.94,267.86 L352.45,265.83 L352.96,263.81 L353.47,261.81 L353.97,259.81 L354.48,257.84 L354.99,255.87 L355.50,253.93 L356.00,252.00 L356.51,250.09 L357.02,248.20 L357.53,246.34 L358.03,244.49 L358.54,242.67 L359.05,240.87 L359.56,239.10 L360.07,237.35 L360.57,235.63 L361.08,233.94 L361.59,232.28 L362.10,230.66 L362.60,229.06 L363.11,227.50 L363.62,225.97 L364.13,224.47 L364.63,223.01 L365.14,221.59 L365.65,220.21 L366.16,218.87 L366.67,217.57 L367.17,216.31 L367.68,215.09 L368.19,213.92 L368.70,212.79 L369.20,211.71 L369.71,210.68 L370.22,209.70 L370.73,208.76 L371.24,207.88 L371.74,207.05 L372.25,206.27 L372.76,205.54 L373.27,204.87 L373.77,204.26 L374.28,203.70 L374.79,203.20 L375.30,202.76 L375.80,202.39 L376.31,202.07 L376.82,201.82 L377.33,201.63 L377.84,201.50 L378.34,201.45 L378.85,201.45 L379.36,201.53 L379.87,201.68 L380.37,201.90 L380.88,202.19 L381.39,202.55 L381.90,202.98 L382.40,203.49 L382.91,204.08 L383.42,204.74 L383.93,205.49 L384.44,206.31 L384.94,207.21 L385.45,208.19 L385.96,209.26 L386.47,210.41 L386.97,211.64 L387.48,212.96 L387.99,214.37 L388.50,215.87 L389.01,217.45 L389.51,219.13 L390.02,220.89 L390.53,222.75 L391.04,224.71 L391.54,226.76 L392.05,228.90 L392.56,231.14 L393.07,233.48 L393.57,235.92 L394.08,238.45 L394.59,241.09 L395.10,243.84 L395.61,246.68 L396.11,249.61 L396.62,252.63 L397.13,255.74 L397.64,258.91 L398.14,262.15 L398.65,265.46 L399.16,268.81 L399.67,272.21 L400.17,275.65 L400.68,279.13 L401.19,282.63 L401.70,286.15 L402.21,289.69 L402.71,293.23 L403.22,296.77 L403.73,300.31 L404.24,303.83 L404.74,307.33 L405.25,310.80 L405.76,314.24 L406.27,317.64 L406.78,321.00 L407.28,324.30 L407.79,327.53 L408.30,330.71 L408.81,333.81 L409.31,336.82 L409.82,339.76 L410.33,342.59 L410.84,345.33 L411.34,347.96 L411.85,350.48 L412.36,352.88 L412.87,355.15 L413.38,357.28 L413.88,359.28 L414.39,361.12 L414.90,362.82 L415.41,364.35 L415.91,365.72 L416.42,366.91 L416.93,367.92 L417.44,368.75 L417.94,369.38 L418.45,369.81 L418.96,370.03 L419.47,370.04 L419.98,369.83 L420.48,369.39 L420.99,368.72 L421.50,367.81 L422.01,366.65 L422.51,365.23 L423.02,363.56 L423.53,361.62 L424.04,359.40 L424.55,356.90 L425.05,354.12 L425.56,351.04 L426.07,347.66 L426.58,343.97 L427.08,339.97 L427.59,335.65 L428.10,331.00 L428.61,326.01 L429.11,320.70 L429.62,315.12 L430.13,309.34 L430.64,303.44 L431.15,297.50 L431.65,291.59 L432.16,285.79 L432.67,280.17 L433.18,274.81 L433.68,269.79 L434.19,265.18 L434.70,261.06 L435.21,257.48 L435.71,254.47 L436.22,251.97 L436.73,249.97 L437.24,248.44 L437.75,247.34 L438.25,246.66 L438.76,246.36 L439.27,246.42 L439.78,246.80 L440.28,247.48 L440.79,248.44 L441.30,249.64 L441.81,251.05 L442.32,252.65 L442.82,254.40 L443.33,256.29 L443.84,258.29 L444.35,260.35 L444.85,262.47 L445.36,264.60 L445.87,266.72 L446.38,268.81 L446.88,270.83 L447.39,272.76 L447.90,274.57 L448.41,276.22 L448.92,277.70 L449.42,278.99 L449.93,280.07 L450.44,280.96 L450.95,281.67 L451.45,282.21 L451.96,282.57 L452.47,282.77 L452.98,282.82 L453.48,282.72 L453.99,282.47 L454.50,282.10 L455.01,281.59 L455.52,280.97 L456.02,280.23 L456.53,279.39 L457.04,278.45 L457.55,277.42 L458.05,276.30 L458.56,275.11 L459.07,273.84 L459.58,272.51 L460.09,271.13 L460.59,269.69 L461.10,268.22 L461.61,266.70 L462.12,265.16 L462.62,263.60 L463.13,262.03 L463.64,260.44" fill="none" stroke="#000" stroke-width="1.65" stroke-linejoin="round"/>
<rect x="106.05" y="322.96" width="5.4" height="5.4" rx="1.9" fill="#0e4a14" stroke="#061a0a" stroke-width="0.7"/>
<rect x="166.22" y="135.30" width="5.4" height="5.4" rx="1.9" fill="#0e4a14" stroke="#061a0a" stroke-width="0.7"/>
<rect x="204.29" y="383.88" width="5.4" height="5.4" rx="1.9" fill="#0e4a14" stroke="#061a0a" stroke-width="0.7"/>
<rect x="258.93" y="209.75" width="5.4" height="5.4" rx="1.9" fill="#0e4a14" stroke="#061a0a" stroke-width="0.7"/>
<rect x="308.67" y="366.04" width="5.4" height="5.4" rx="1.9" fill="#0e4a14" stroke="#061a0a" stroke-width="0.7"/>
<rect x="392.42" y="240.15" width="4.9" height="4.9" rx="1.5" fill="#fff" stroke="#000" stroke-width="1.4"/>
<rect x="426.19" y="323.21" width="4.9" height="4.9" rx="1.5" fill="#fff" stroke="#000" stroke-width="1.4"/>
<rect x="432.33" y="257.99" width="4.9" height="4.9" rx="1.5" fill="#fff" stroke="#000" stroke-width="1.4"/>
<rect x="446.45" y="275.22" width="4.9" height="4.9" rx="1.5" fill="#fff" stroke="#000" stroke-width="1.4"/>
<rect x="461.19" y="257.99" width="4.9" height="4.9" rx="1.5" fill="#fff" stroke="#000" stroke-width="1.4"/>
</svg>
<rect x="511" y="87.5" width="122" height="368" fill="#ffffff"/>
<rect x="511" y="87.6" width="121.8" height="1.4" fill="#6e6e6e"/>
<rect x="511" y="87.6" width="1.4" height="368" fill="#6e6e6e"/>
<rect x="507.5" y="87" width="3.5" height="369" fill="#f0f0f0"/>
<rect x="632" y="87" width="1" height="369" fill="#f4f4f4"/>
<rect x="536.1" y="89" width="0.9" height="366" fill="#e6e6e6"/>
<rect x="584.1" y="89" width="0.9" height="366" fill="#e6e6e6"/>
<rect x="515" y="107.90" width="21.1" height="14.40" fill="#3399ff"/>
<rect x="537" y="107.90" width="47.1" height="14.40" fill="#3399ff"/>
<rect x="585" y="107.90" width="47" height="14.40" fill="#3399ff"/>
<rect x="515" y="122.30" width="117" height="0.8" fill="#a8d4fc"/>
<rect x="536.1" y="107.90" width="0.9" height="15.20" fill="#d8ecff"/>
<rect x="584.1" y="107.90" width="0.9" height="15.20" fill="#d8ecff"/>
<rect x="515" y="123.10" width="21.1" height="14.40" fill="#3399ff"/>
<rect x="537" y="123.10" width="47.1" height="14.40" fill="#3399ff"/>
<rect x="585" y="123.10" width="47" height="14.40" fill="#3399ff"/>
<rect x="515" y="137.50" width="117" height="0.8" fill="#a8d4fc"/>
<rect x="536.1" y="123.10" width="0.9" height="15.20" fill="#d8ecff"/>
<rect x="584.1" y="123.10" width="0.9" height="15.20" fill="#d8ecff"/>
<rect x="515" y="138.30" width="21.1" height="14.40" fill="#3399ff"/>
<rect x="537" y="138.30" width="47.1" height="14.40" fill="#3399ff"/>
<rect x="585" y="138.30" width="47" height="14.40" fill="#3399ff"/>
<rect x="515" y="152.70" width="117" height="0.8" fill="#a8d4fc"/>
<rect x="536.1" y="138.30" width="0.9" height="15.20" fill="#d8ecff"/>
<rect x="584.1" y="138.30" width="0.9" height="15.20" fill="#d8ecff"/>
<rect x="515" y="153.50" width="21.1" height="14.40" fill="#3399ff"/>
<rect x="537" y="153.50" width="47.1" height="14.40" fill="#3399ff"/>
<rect x="585" y="153.50" width="47" height="14.40" fill="#3399ff"/>
<rect x="515" y="167.90" width="117" height="0.8" fill="#a8d4fc"/>
<rect x="536.1" y="153.50" width="0.9" height="15.20" fill="#d8ecff"/>
<rect x="584.1" y="153.50" width="0.9" height="15.20" fill="#d8ecff"/>
<rect x="515" y="168.70" width="21.1" height="14.40" fill="#3399ff"/>
<rect x="537" y="168.70" width="47.1" height="14.40" fill="#3399ff"/>
<rect x="585" y="168.70" width="47" height="14.40" fill="#3399ff"/>
<rect x="515" y="183.10" width="117" height="0.8" fill="#a8d4fc"/>
<rect x="536.1" y="168.70" width="0.9" height="15.20" fill="#d8ecff"/>
<rect x="584.1" y="168.70" width="0.9" height="15.20" fill="#d8ecff"/>
<rect x="515.4" y="169.10" width="116.2" height="13.60" fill="none" stroke="#6a5a60" stroke-width="0.8" stroke-dasharray="1 1"/>
<rect x="512.4" y="183.10" width="120" height="0.8" fill="#e8e8e8"/>
<rect x="512.4" y="198.30" width="120" height="0.8" fill="#e8e8e8"/>
<rect x="512.4" y="213.50" width="120" height="0.8" fill="#e8e8e8"/>
<rect x="512.4" y="228.70" width="120" height="0.8" fill="#e8e8e8"/>
<rect x="512.4" y="243.90" width="120" height="0.8" fill="#e8e8e8"/>
<rect x="512.4" y="259.10" width="120" height="0.8" fill="#e8e8e8"/>
<rect x="512.4" y="274.30" width="120" height="0.8" fill="#e8e8e8"/>
<rect x="512.4" y="289.50" width="120" height="0.8" fill="#e8e8e8"/>
<rect x="512.4" y="304.70" width="120" height="0.8" fill="#e8e8e8"/>
<rect x="512.4" y="319.90" width="120" height="0.8" fill="#e8e8e8"/>
<rect x="512.4" y="335.10" width="120" height="0.8" fill="#e8e8e8"/>
<rect x="512.4" y="350.30" width="120" height="0.8" fill="#e8e8e8"/>
<rect x="512.4" y="365.50" width="120" height="0.8" fill="#e8e8e8"/>
<rect x="512.4" y="380.70" width="120" height="0.8" fill="#e8e8e8"/>
<rect x="512.4" y="395.90" width="120" height="0.8" fill="#e8e8e8"/>
<rect x="512.4" y="411.10" width="120" height="0.8" fill="#e8e8e8"/>
<rect x="512.4" y="426.30" width="120" height="0.8" fill="#e8e8e8"/>
<rect x="512.4" y="441.50" width="120" height="0.8" fill="#e8e8e8"/>
<rect x="512.4" y="107.10" width="120" height="0.8" fill="#f2e6de"/>
<text x="517" y="101.6" font-size="10.5" fill="#202020" textLength="10.5" lengthAdjust="spacingAndGlyphs" stroke="#202020" stroke-width="0.25">№</text>
<text x="559.5" y="101.6" font-size="9.4" fill="#202020" text-anchor="middle" stroke="#202020" stroke-width="0.3">X</text>
<text x="608.3" y="101.6" font-size="9.4" fill="#202020" text-anchor="middle" stroke="#202020" stroke-width="0.3">F</text>
<text x="517" y="119.40" font-size="9.5" fill="#ffffff" stroke="#ffffff" stroke-width="0.12" textLength="4.7" lengthAdjust="spacingAndGlyphs">1</text>
<text x="548.10" y="119.40" font-size="9.5" fill="#ffffff" stroke="#ffffff" stroke-width="0.12" textLength="24.2" lengthAdjust="spacingAndGlyphs">-289.5</text>
<text x="601.90" y="119.40" font-size="9.5" fill="#ffffff" stroke="#ffffff" stroke-width="0.12" textLength="12.6" lengthAdjust="spacingAndGlyphs">-99</text>
<text x="517" y="134.55" font-size="9.5" fill="#ffffff" stroke="#ffffff" stroke-width="0.12" textLength="4.7" lengthAdjust="spacingAndGlyphs">2</text>
<text x="548.10" y="134.55" font-size="9.5" fill="#ffffff" stroke="#ffffff" stroke-width="0.12" textLength="24.2" lengthAdjust="spacingAndGlyphs">-191.5</text>
<text x="601.15" y="134.55" font-size="9.5" fill="#ffffff" stroke="#ffffff" stroke-width="0.12" textLength="14.1" lengthAdjust="spacingAndGlyphs">206</text>
<text x="517" y="149.70" font-size="9.5" fill="#ffffff" stroke="#ffffff" stroke-width="0.12" textLength="4.7" lengthAdjust="spacingAndGlyphs">3</text>
<text x="548.10" y="149.70" font-size="9.5" fill="#ffffff" stroke="#ffffff" stroke-width="0.12" textLength="24.2" lengthAdjust="spacingAndGlyphs">-129.5</text>
<text x="599.55" y="149.70" font-size="9.5" fill="#ffffff" stroke="#ffffff" stroke-width="0.12" textLength="17.3" lengthAdjust="spacingAndGlyphs">-198</text>
<text x="517" y="164.85" font-size="9.5" fill="#ffffff" stroke="#ffffff" stroke-width="0.12" textLength="4.7" lengthAdjust="spacingAndGlyphs">4</text>
<text x="550.45" y="164.85" font-size="9.5" fill="#ffffff" stroke="#ffffff" stroke-width="0.12" textLength="19.5" lengthAdjust="spacingAndGlyphs">-40.5</text>
<text x="603.50" y="164.85" font-size="9.5" fill="#ffffff" stroke="#ffffff" stroke-width="0.12" textLength="9.4" lengthAdjust="spacingAndGlyphs">85</text>
<text x="517" y="180.00" font-size="9.5" fill="#ffffff" stroke="#ffffff" stroke-width="0.12" textLength="4.7" lengthAdjust="spacingAndGlyphs">5</text>
<text x="552.05" y="180.00" font-size="9.5" fill="#ffffff" stroke="#ffffff" stroke-width="0.12" textLength="16.3" lengthAdjust="spacingAndGlyphs">40.5</text>
<text x="599.55" y="180.00" font-size="9.5" fill="#ffffff" stroke="#ffffff" stroke-width="0.12" textLength="17.3" lengthAdjust="spacingAndGlyphs">-169</text>
<text x="517" y="195.15" font-size="9.5" fill="#1a1a1a" stroke="#1a1a1a" stroke-width="0.12" textLength="4.7" lengthAdjust="spacingAndGlyphs">6</text>
<text x="549.70" y="195.15" font-size="9.5" fill="#1a1a1a" stroke="#1a1a1a" stroke-width="0.12" textLength="21.0" lengthAdjust="spacingAndGlyphs">176.5</text>
<text x="603.50" y="195.15" font-size="9.5" fill="#1a1a1a" stroke="#1a1a1a" stroke-width="0.12" textLength="9.4" lengthAdjust="spacingAndGlyphs">36</text>
<text x="517" y="210.30" font-size="9.5" fill="#1a1a1a" stroke="#1a1a1a" stroke-width="0.12" textLength="4.7" lengthAdjust="spacingAndGlyphs">7</text>
<text x="549.70" y="210.30" font-size="9.5" fill="#1a1a1a" stroke="#1a1a1a" stroke-width="0.12" textLength="21.0" lengthAdjust="spacingAndGlyphs">231.5</text>
<text x="601.90" y="210.30" font-size="9.5" fill="#1a1a1a" stroke="#1a1a1a" stroke-width="0.12" textLength="12.6" lengthAdjust="spacingAndGlyphs">-99</text>
<text x="517" y="225.45" font-size="9.5" fill="#1a1a1a" stroke="#1a1a1a" stroke-width="0.12" textLength="4.7" lengthAdjust="spacingAndGlyphs">8</text>
<text x="549.70" y="225.45" font-size="9.5" fill="#1a1a1a" stroke="#1a1a1a" stroke-width="0.12" textLength="21.0" lengthAdjust="spacingAndGlyphs">241.5</text>
<text x="605.85" y="225.45" font-size="9.5" fill="#1a1a1a" stroke="#1a1a1a" stroke-width="0.12" textLength="4.7" lengthAdjust="spacingAndGlyphs">7</text>
<text x="517" y="240.60" font-size="9.5" fill="#1a1a1a" stroke="#1a1a1a" stroke-width="0.12" textLength="4.7" lengthAdjust="spacingAndGlyphs">9</text>
<text x="549.70" y="240.60" font-size="9.5" fill="#1a1a1a" stroke="#1a1a1a" stroke-width="0.12" textLength="21.0" lengthAdjust="spacingAndGlyphs">264.5</text>
<text x="601.90" y="240.60" font-size="9.5" fill="#1a1a1a" stroke="#1a1a1a" stroke-width="0.12" textLength="12.6" lengthAdjust="spacingAndGlyphs">-21</text>
<text x="517" y="255.75" font-size="9.5" fill="#1a1a1a" stroke="#1a1a1a" stroke-width="0.12" textLength="9.4" lengthAdjust="spacingAndGlyphs">10</text>
<text x="549.70" y="255.75" font-size="9.5" fill="#1a1a1a" stroke="#1a1a1a" stroke-width="0.12" textLength="21.0" lengthAdjust="spacingAndGlyphs">288.5</text>
<text x="605.85" y="255.75" font-size="9.5" fill="#1a1a1a" stroke="#1a1a1a" stroke-width="0.12" textLength="4.7" lengthAdjust="spacingAndGlyphs">7</text>
<rect x="7" y="456.2" width="626" height="16.6" fill="#f0f0f0"/>
<rect x="7" y="471.6" width="626" height="0.8" fill="#fbf8f0"/>
<rect x="290" y="458.5" width="0.8" height="13" fill="#fafafa"/>
<rect x="291" y="458.5" width="1" height="13.5" fill="#d0d0d0"/>
<rect x="292" y="458.5" width="0.8" height="13" fill="#fafafa"/>
<rect x="453" y="458.5" width="0.8" height="13" fill="#fafafa"/>
<rect x="454" y="458.5" width="1" height="13.5" fill="#d0d0d0"/>
<rect x="455" y="458.5" width="0.8" height="13" fill="#fafafa"/>
<text x="9.2" y="470" font-size="11.4" fill="#202020" textLength="155" lengthAdjust="spacingAndGlyphs" >Smooth Curve, Nodes: 10, Selected: 5</text>
<text x="459" y="470" font-size="11.4" fill="#202020" textLength="69" lengthAdjust="spacingAndGlyphs" >X = 346.6, F = 85</text>
<rect x="628" y="466" width="1.2" height="1.2" fill="#a8a8a8"/>
<rect x="626" y="468.5" width="1.2" height="1.2" fill="#a8a8a8"/>
<rect x="628" y="468.5" width="1.2" height="1.2" fill="#a8a8a8"/>
<rect x="624" y="471" width="1.2" height="1.2" fill="#a8a8a8"/>
<rect x="626" y="471" width="1.2" height="1.2" fill="#a8a8a8"/>
<rect x="628" y="471" width="1.2" height="1.2" fill="#a8a8a8"/>
</svg></body></html>
